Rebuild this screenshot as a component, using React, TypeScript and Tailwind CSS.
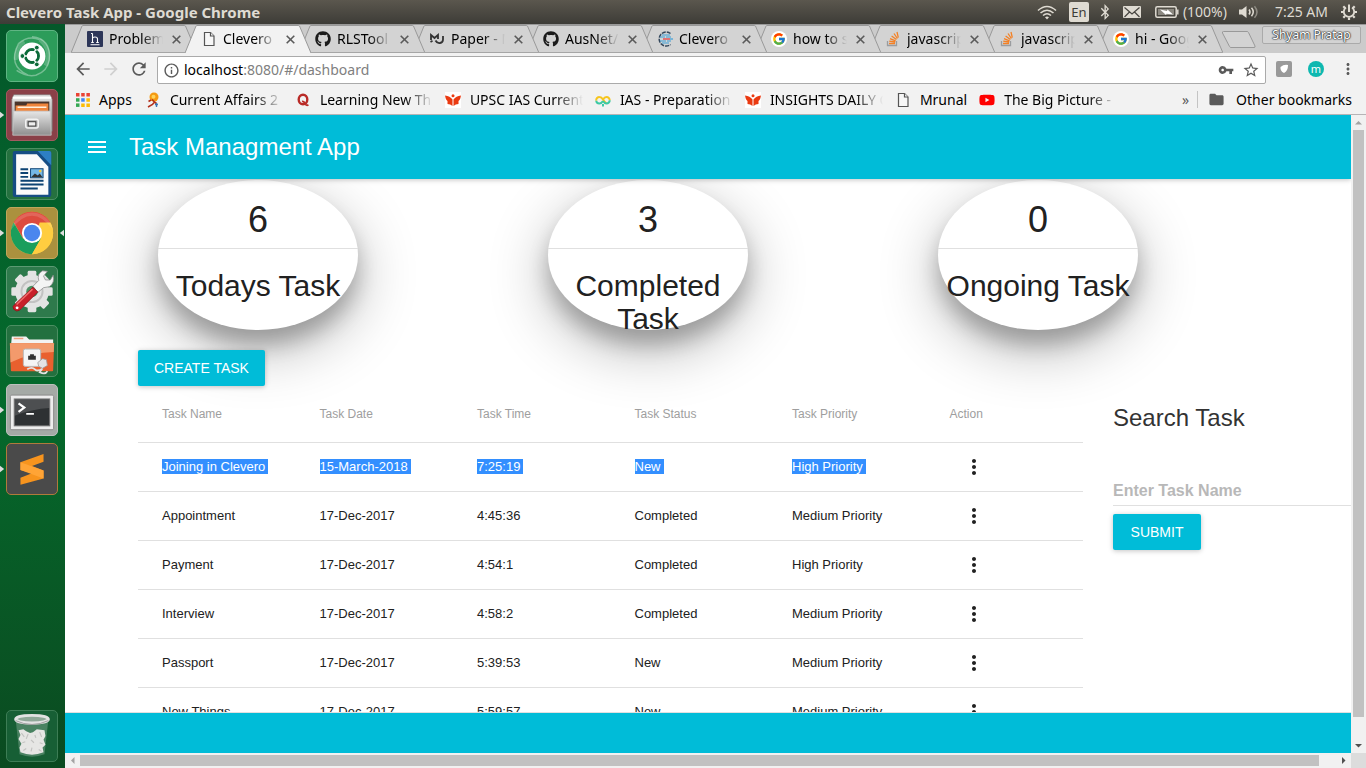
import React from 'react';
import { FaBluetoothB, FaGithub, FaStackOverflow, FaYoutube } from 'react-icons/fa';
import { FcGoogle } from 'react-icons/fc';
import {
  MdArrowBack,
  MdArrowForward,
  MdFolder,
  MdInfoOutline,
  MdMenu,
  MdMoreVert,
  MdRefresh,
  MdStarBorder,
  MdVpnKey,
} from 'react-icons/md';

/* ---------- small drawings ---------- */

const PageIcon = () => (
  <svg viewBox="0 0 16 16" className="size-4" fill="#f7f7f7" stroke="#555" strokeWidth="1.2">
    <path d="M3.5 1.5h6l3.5 3.5v9.5H3.5z" />
    <path d="M9.5 1.5V5H13" />
  </svg>
);

const HackerIcon = () => (
  <svg viewBox="0 0 16 16" className="size-4">
    <rect width="16" height="16" rx="1" fill="#2d3658" />
    <path d="M5.5 2.5v9M5.5 7.5q0-1.500 2.500-1.500t2.500 2v3.500M4 2.500h1.500M4.200 11.500h2.600M9.200 11.500h2.600M3.500 13.800h9" stroke="#fff" strokeWidth="1.100" fill="none" />
  </svg>
);

const PaperIcon = () => (
  <svg viewBox="0 0 16 16" className="size-4" fill="none" stroke="#333" strokeWidth="1.800">
    <path d="M2 9V4l3.500 3L9 4v4" />
    <path d="M6.500 9.500q1.500 3 4.500 2.500 3-.5 3-3.500V5" />
    <path d="M1.500 11l2-1.200" />
  </svg>
);

const CleveroIcon = () => (
  <svg viewBox="0 0 16 16" className="size-4" fill="none" strokeWidth="1.500">
    <path d="M13.500 2.500A7 7 0 1 0 13.500 13.500" stroke="#33475c" strokeDasharray="4 1" />
    <path d="M5 4h8M3 6h5M9 6h5M3 10h6M10 10h4M5 12h7" stroke="#3d9fd8" strokeWidth="1.200" />
    <path d="M6 8h7" stroke="#e5484d" strokeWidth="1.400" />
    <path d="M13 8h3" stroke="#3d9fd8" strokeWidth="1.200" />
  </svg>
);

const StackIcon = () => (
  <svg viewBox="0 0 16 16" className="size-4" fill="none">
    <path d="M2.500 10v4.500h9V10" stroke="#9a9c9f" strokeWidth="1.300" />
    <path d="M4 12.500h6M4.200 10.200l6 .8M5 7.600l5.600 2.200M6.600 5l4.800 3.600M9 2.500l3.400 5M12 1l1.300 5.700" stroke="#f48024" strokeWidth="1.300" />
  </svg>
);

const GoogleIcon = () => (
  <span className="grid size-4 place-items-center rounded-full bg-white">
    <FcGoogle className="size-[14px]" />
  </span>
);

const AppsIcon = () => (
  <svg viewBox="0 0 16 16" className="size-4">
    <path d="M1 1h3.500v3.500H1zM6.200 1h3.500v3.500H6.200zM11.400 1h3.500v3.500h-3.500z" fill="#ea4335" />
    <path d="M1 6.200h3.500v3.500H1z" fill="#34a853" />
    <path d="M6.200 6.200h3.500v3.500H6.200z" fill="#4285f4" />
    <path d="M11.400 6.200h3.500v3.500h-3.500zM6.200 11.400h3.500v3.500H6.200zM11.400 11.400h3.500v3.500h-3.500z" fill="#fbbc05" />
    <path d="M1 11.400h3.500v3.500H1z" fill="#34a853" />
  </svg>
);

const AffairsIcon = () => (
  <svg viewBox="0 0 16 16" className="size-4">
    <circle cx="9" cy="5" r="4.500" fill="#f59a12" />
    <circle cx="8.500" cy="4.800" r="2" fill="#ffd35a" />
    <path d="M7 7.500l2.500 2.500-2 2.500-4.500 2.500M9.500 10l2 1.500M6 8l-2.500 1.500" stroke="#b3301c" strokeWidth="1.600" fill="none" />
    <path d="M10 12.500h3M11.500 11v4" stroke="#3d77b5" strokeWidth="1.400" />
  </svg>
);

const QuoraIcon = () => (
  <svg viewBox="0 0 16 16" className="size-4" fill="none" stroke="#b92b27">
    <ellipse cx="8" cy="7.500" rx="4.300" ry="4.800" strokeWidth="2.400" />
    <path d="M7 9.500q2-.5 3 2t3.500 1.500" strokeWidth="1.800" />
  </svg>
);

const BookIcon = () => (
  <svg viewBox="0 0 16 16" className="size-4">
    <rect width="16" height="16" fill="#fff" />
    <path d="M0 3.500q5 .5 7.500 4V14Q5.500 12 2.500 12V9Q.8 8 0 3.500zM16 3.500q-5 .5-7.500 4V14q2-2 5-2V9q1.700-1 2.500-5.500z" fill="#ea3a12" />
    <circle cx="8" cy="3.800" r="1.500" fill="#ea3a12" />
  </svg>
);

const LoopIcon = () => (
  <svg viewBox="0 0 16 16" className="size-4" fill="none" strokeWidth="2">
    <path d="M8 9Q6.500 11.500 4.500 11.500a3.200 3.200 0 0 1-3.300-3" stroke="#3cc9a4" />
    <path d="M1.200 8.500A3.200 3.200 0 0 1 4.500 5Q6.500 5 8 7.500T11.500 11.500" stroke="#f6c51e" />
    <path d="M8 7.500Q9.500 5 11.500 5a3.200 3.200 0 0 1 3.200 3.300" stroke="#f6c51e" />
    <path d="M14.700 8.200a3.200 3.200 0 0 1-3.200 3.300Q9.500 11.500 8 9M8 12v2.500" stroke="#3cc9a4" />
  </svg>
);

const WifiIcon = () => (
  <svg viewBox="0 0 20 16" className="h-4 w-5" fill="none" stroke="#dfdbd2" strokeWidth="1.600">
    <path d="M1 6.500Q10-1.500 19 6.500" />
    <path d="M3.500 9Q10 3.500 16.500 9" />
    <path d="M6 11.500Q10 8 14 11.500" />
    <path d="M8 13.300Q10 11.500 12 13.300L10 15.500z" fill="#dfdbd2" stroke="none" />
  </svg>
);

const MailIcon = () => (
  <svg viewBox="0 0 18 14" className="h-[14px] w-[18px]">
    <rect y="1" width="18" height="12" rx="1" fill="#dfdbd2" />
    <path d="M1.500 2.500L9 9l7.500-6.500M1.500 12l5-5M16.500 12l-5-5" stroke="#474540" strokeWidth="1.200" fill="none" />
  </svg>
);

const BatteryIcon = () => (
  <svg viewBox="0 0 24 14" className="h-[14px] w-6">
    <rect x=".8" y="1.800" width="20.400" height="10.400" rx="1.500" fill="none" stroke="#dfdbd2" strokeWidth="1.500" />
    <rect x="3" y="4" width="16" height="6" fill="#8b8880" />
    <path d="M22.800 4.500v5" stroke="#dfdbd2" strokeWidth="1.500" />
    <path d="M5 4.500l7 1.500.5-1.500L18 9.500l-6.500-.8-.5 1.300z" fill="#fff" />
  </svg>
);

const SoundIcon = () => (
  <svg viewBox="0 0 20 16" className="h-4 w-5" fill="none" stroke="#dfdbd2" strokeWidth="1.500">
    <path d="M0 5.500h3L7.500 2v12L3 10.500H0z" fill="#dfdbd2" stroke="none" />
    <path d="M10 5.500q2 2.500 0 5" />
    <path d="M12.500 3.800q3.500 4.200 0 8.400" />
    <path d="M15.500 2.200q5 5.800 0 11.600" stroke="#8e8b83" />
  </svg>
);

const SessionIcon = () => (
  <svg viewBox="0 0 18 18" className="size-[18px]" fill="none" stroke="#dfdbd2">
    <path d="M6 4.500a5.200 5.200 0 1 0 6 0" strokeWidth="1.800" />
    <path d="M9 1.500V9" strokeWidth="2" />
    <path d="M1 9h2.500M14.500 9H17M3.300 14.700L5 13M14.700 14.700L13 13M3.300 3.300L5 5M14.700 3.300L13 5M9 14.500V17" strokeWidth="2.200" />
  </svg>
);

/* ---------- launcher drawings ---------- */

const UbuntuArt = () => (
  <svg viewBox="0 0 52 52" className="size-full">
    <g fill="none" stroke="#fff">
      <path d="M26 6q20 2 18 24-2 12-14 16M12 13Q0 36 22 46M30 46q-10 2-20-5M12 13Q22 4 34 9" strokeOpacity=".35" strokeWidth="1.500" />
      <path d="M34 9q14 12 6 27M9 30q1-14 9-19" strokeOpacity=".2" strokeWidth="4" />
    </g>
    <circle cx="26" cy="26" r="14" fill="#fff" />
    <circle cx="26" cy="26" r="6.800" fill="none" stroke="#0c6b39" strokeWidth="3" />
    <path d="M26 26H16M26 26l5-8.700M26 26l5 8.700" stroke="#fff" strokeWidth="1.500" />
    <circle cx="26" cy="26" r="5.300" fill="#fff" />
    <g fill="#0c6b39" stroke="#fff" strokeWidth="1">
      <circle cx="16" cy="26" r="2.500" />
      <circle cx="31" cy="17.300" r="2.500" />
      <circle cx="31" cy="34.700" r="2.500" />
    </g>
  </svg>
);

const FilesArt = () => (
  <svg viewBox="0 0 52 52" className="size-full">
    <defs>
      <linearGradient id="steel" x1="0" y1="0" x2="0" y2="1">
        <stop offset="0" stopColor="#e6e6e6" />
        <stop offset="1" stopColor="#8f8f8f" />
      </linearGradient>
    </defs>
    <path d="M7 5h38l2 5v33H5V10z" fill="url(#steel)" stroke="#777" strokeWidth=".6" />
    <path d="M6 8h40" stroke="#fff" strokeWidth="2" />
    <rect x="8" y="12" width="36" height="10" fill="#4a342b" />
    <path d="M9 16h11l1-2h22v8H9z" fill="#f0853c" />
    <path d="M11 18h30" stroke="#fff0dd" strokeWidth="1.500" />
    <path d="M7 22h38l1 25H6z" fill="url(#steel)" stroke="#c9c9c9" strokeWidth=".8" />
    <rect x="19.500" y="30.500" width="13" height="9" rx="2" fill="#bbb" stroke="#f2f2f2" strokeWidth="1.500" />
    <rect x="22" y="33" width="8" height="4.500" fill="#eee" stroke="#333" />
  </svg>
);

const WriterArt = () => (
  <svg viewBox="0 0 52 52" className="size-full">
    <path d="M8 2h36q2 0 2 2v43q0 3-3 3H9q-3 0-3-3V4q0-2 2-2z" fill="#164d84" />
    <path d="M32 2h12q2 0 2 2v13z" fill="#2d7fc4" />
    <path d="M9.500 5.500H31L43 18.500v29H9.500z" fill="#fbfbfb" />
    <path d="M14 21h8M14 25h8M14 29h8M14 33h24M14 37h24M14 41h18" stroke="#0d4373" strokeWidth="2" />
    <rect x="24.500" y="20.500" width="13" height="9.500" fill="#75b7e5" stroke="#0d4373" />
    <path d="M25 29.500l4-4 3 2 2-2 3 4z" fill="#333" />
    <circle cx="34.500" cy="23" r="1.400" fill="#f5c83c" />
  </svg>
);

const ChromeArt = () => (
  <svg viewBox="0 0 52 52" className="size-full">
    <circle cx="26" cy="26" r="22" fill="#ffcd40" />
    <path d="M26 26L6.950 15A22 22 0 0 1 45.050 15z" fill="#dd4b3e" />
    <path d="M26 15h19a22 22 0 0 0-38-.2L16.500 31.500 18 22z" fill="#dd4b3e" />
    <path d="M6.950 15A22 22 0 0 0 26 48l9.500-16.500L26 36l-9.500-4.500z" fill="#1a9e5c" />
    <path d="M26 48l9.500-16.500L36 26l-3-8 1-3h11a22 22 0 0 1-19 33z" fill="#ffcd40" />
    <path d="M4.500 22a22 22 0 0 1 43 0Q26-6 4.500 22z" fill="#fff" opacity=".15" />
    <circle cx="26" cy="26" r="10.500" fill="#fff" />
    <circle cx="26" cy="26" r="8.500" fill="#4a86ee" />
  </svg>
);

const SettingsArt = () => (
  <svg viewBox="0 0 52 52" className="size-full">
    <g fill="#e3e3e3">
      {[0, 45, 90, 135].map((a) => (
        <rect key={a} x="21.500" y="4" width="9" height="43" rx="1.500" transform={`rotate(${a} 26 25.500)`} />
      ))}
      <circle cx="26" cy="25.500" r="17.500" />
    </g>
    <circle cx="26" cy="25.500" r="11" fill="none" stroke="#c2c2c2" strokeWidth="2" />
    <circle cx="26" cy="25.500" r="6" fill="#4b8f63" />
    <path d="M27 20l6-6q-2-7 4-10l5 .5-4 5 2 4 5 0 3-5q2 8-4 12l-6 1-6 5z" fill="#f4f4f4" stroke="#8c8c8c" strokeWidth=".8" />
    <path d="M27 21l5 5-19 19q-3 2-6-1-2-3 1-5z" fill="#c8202a" stroke="#8d1219" strokeWidth=".8" />
    <path d="M26.500 23L10 39" stroke="#f06a6a" strokeWidth="1.500" />
    <circle cx="10.500" cy="42.500" r="1.500" fill="#fff" />
  </svg>
);

const NetworkArt = () => (
  <svg viewBox="0 0 52 52" className="size-full">
    <path d="M5 11h15l3 3h25v8H4z" fill="#f3f3f3" />
    <path d="M7 13h10" stroke="#f0a080" strokeWidth="1.500" />
    <path d="M3 18h46l-1 28q0 1-1 1H5q-1 0-1-1z" fill="#e9602e" />
    <path d="M3 18h46l-.4 9Q26 27 3.600 38z" fill="#f39a6c" />
    <rect x="17" y="24" width="18" height="18" rx="2" fill="#f5f5f5" stroke="#b9b9b9" />
    <path d="M22 35v-4h2v-1.500h4V31h2v4z" fill="#333" />
    <path d="M21 45q5-3 8 0t8-1l-3 4q6 3 8-1" fill="none" stroke="#e2e2e2" strokeWidth="1.800" />
    <path d="M32 38l5-4 4 1 1 6-5 3-4-2z" fill="#e4e4e4" stroke="#999" strokeWidth=".8" />
  </svg>
);

const TerminalArt = () => (
  <svg viewBox="0 0 52 52" className="size-full">
    <rect x="3.500" y="10.500" width="45" height="36" rx="1.500" fill="#ededed" stroke="#888" />
    <rect x="7.500" y="14.500" width="37" height="28" fill="#2e3133" stroke="#777" />
    <path d="M8 15h36v9Q26 25 8 32z" fill="#fff" opacity=".15" />
    <path d="M12 19l6 4.500-6 4.500" fill="none" stroke="#fff" strokeWidth="2.300" />
    <path d="M20 30h8" stroke="#fff" strokeWidth="2" />
  </svg>
);

const SublimeArt = () => (
  <svg viewBox="0 0 52 52" className="size-full">
    <path d="M14 19L38 10.500v8L26 23l12 4.500V36L14 42.500V35l12-4.500L14 27z" fill="#f7941e" />
    <path d="M14 19v8l24 9v-8.500z" fill="#ffa436" />
  </svg>
);

const TrashArt = () => (
  <svg viewBox="0 0 52 52" className="size-full">
    <path d="M9 9l4 36q13 5 26 0l4-36z" fill="#fff" opacity=".22" />
    <path d="M12 20l5-1 3 2 4 2 3-1 4-3 8 1 1 6-2 4 2 5-3 3 1 5q-12 5-24 0l-1-5 2-4-3-5 2-4z" fill="#e6e6e4" />
    <path d="M15 23l3 4M22 24l-2 5M34 22l2 5M16 33l3-1M25 30l3 3M34 33l3 1M17 41l3-2M26 38l-1 4M33 40l3 2M29 25l1 3" fill="none" stroke="#c3c3c1" strokeWidth="1.200" />
    <ellipse cx="26" cy="8.500" rx="17" ry="4" fill="#8fa898" stroke="#e2e2e2" strokeWidth="3" />
    <path d="M9 10q17 8 34 0" fill="none" stroke="#9d9d9d" strokeWidth="1" />
  </svg>
);

/* ---------- data ---------- */

const launcher = [
  { name: 'Search your computer', art: <UbuntuArt />, tile: 'bg-[#2c9c5a] border-[#5fb583]' },
  { name: 'Files', art: <FilesArt />, tile: 'bg-[#8a4048] border-[#a35a60]', running: true },
  { name: 'LibreOffice Writer', art: <WriterArt />, tile: 'bg-[#25713f] border-[#4b8f62]' },
  { name: 'Google Chrome', art: <ChromeArt />, tile: 'bg-[#ab913e] border-[#bfa65c]', running: true, focused: true },
  { name: 'System Settings', art: <SettingsArt />, tile: 'bg-[#2e7a4c] border-[#5c9a73]' },
  { name: 'Network', art: <NetworkArt />, tile: 'bg-[#23703f] border-[#4b8f62]' },
  { name: 'Terminal', art: <TerminalArt />, tile: 'bg-[#a5aaa6] border-[#bcc0bd]', running: true },
  { name: 'Sublime Text', art: <SublimeArt />, tile: 'bg-[#4a4a4a] border-[#b07a3c]', running: true },
];

const tabs = [
  { title: 'Problem', icon: <HackerIcon /> },
  { title: 'Clevero', icon: <PageIcon />, active: true },
  { title: 'RLSTool', icon: <FaGithub className="size-4 text-[#1b1b1b]" /> },
  { title: 'Paper - M', icon: <PaperIcon /> },
  { title: 'AusNet/', icon: <FaGithub className="size-4 text-[#1b1b1b]" /> },
  { title: 'Clevero', icon: <CleveroIcon /> },
  { title: 'how to s', icon: <GoogleIcon /> },
  { title: 'javascrip', icon: <StackIcon /> },
  { title: 'javascrip', icon: <StackIcon /> },
  { title: 'hi - Goog', icon: <GoogleIcon /> },
];

const bookmarks = [
  { title: 'Current Affairs 2', icon: <AffairsIcon /> },
  { title: 'Learning New Th', icon: <QuoraIcon /> },
  { title: 'UPSC IAS Current', icon: <BookIcon /> },
  { title: 'IAS - Preparation', icon: <LoopIcon /> },
  { title: 'INSIGHTS DAILY C', icon: <BookIcon /> },
  { title: 'Mrunal', icon: <PageIcon />, short: true },
  { title: 'The Big Picture -', icon: <FaYoutube className="size-4 text-[#f00]" /> },
];

const stats = [
  { count: 6, label: 'Todays Task' },
  { count: 3, label: 'Completed Task' },
  { count: 0, label: 'Ongoing Task' },
];

const columns = ['Task Name', 'Task Date', 'Task Time', 'Task Status', 'Task Priority', 'Action'];

const tasks = [
  ['Joining in Clevero', '15-March-2018', '7:25:19', 'New', 'High Priority'],
  ['Appointment', '17-Dec-2017', '4:45:36', 'Completed', 'Medium Priority'],
  ['Payment', '17-Dec-2017', '4:54:1', 'Completed', 'High Priority'],
  ['Interview', '17-Dec-2017', '4:58:2', 'Completed', 'Medium Priority'],
  ['Passport', '17-Dec-2017', '5:39:53', 'New', 'Medium Priority'],
  ['New Things', '17-Dec-2017', '5:59:57', 'New', 'Medium Priority'],
];

/* ---------- desktop ---------- */

function SystemBar() {
  return (
    <header className="flex h-6 shrink-0 items-center justify-between bg-linear-to-b from-[#5b574e] to-[#3d3c37] pr-2 pl-[6px] text-sm text-[#dfdbd2]">
      <h1 className="text-[15px] leading-5 font-bold">Clevero Task App - Google Chrome</h1>
      <div className="flex items-center">
        <WifiIcon />
        <span className="ml-3 grid h-5 w-5 place-items-center rounded-xs bg-[#dfdbd2] text-[13px] text-[#3d3c37]">En</span>
        <FaBluetoothB className="ml-2 size-4" />
        <span className="ml-[10px]"><MailIcon /></span>
        <span className="ml-[14px]"><BatteryIcon /></span>
        <span className="ml-1">(100%)</span>
        <span className="ml-3"><SoundIcon /></span>
        <time className="ml-4 whitespace-nowrap">7:25 AM</time>
        <span className="ml-3"><SessionIcon /></span>
      </div>
    </header>
  );
}

function Launcher() {
  return (
    <nav aria-label="Launcher" className="flex w-[65px] shrink-0 flex-col gap-[7px] bg-linear-to-b from-[#04582a] via-[#046a2c] to-[#0a4a20] pt-[6px] pb-[6px]">
      {launcher.map((item) => (
        <div key={item.name} className="flex items-center">
          <span className="w-[6px]">
            {item.running && (
              <svg viewBox="0 0 6 8" className="h-2 w-[5px]"><path d="M0 0l5 4-5 4z" fill="#ddd" /></svg>
            )}
          </span>
          <button aria-label={item.name} className={`size-[52px] overflow-hidden rounded-[5px] border ${item.tile}`}>
            {item.art}
          </button>
          {item.focused && (
            <svg viewBox="0 0 6 8" className="ml-[1px] h-2 w-[5px]"><path d="M6 0L1 4l5 4z" fill="#ddd" /></svg>
          )}
        </div>
      ))}
      <button aria-label="Trash" className="mt-auto ml-[6px] size-[52px] overflow-hidden rounded-[5px] border border-[#3d7d55] bg-[#175f35]">
        <TrashArt />
      </button>
    </nav>
  );
}

function TabStrip() {
  return (
    <div className="flex h-[29px] items-start border-t border-[#999] bg-[#cbcbcb] pr-[5px]">
      <div role="tablist" className="flex pl-[6px]">
        {tabs.map((tab, i) => (
          <div
            key={i}
            className="relative -mr-3 flex h-7 w-[126px] shrink-0 items-center px-4"
            style={{ zIndex: tab.active ? 20 : 10 - i }}
          >
            <svg viewBox="0 0 126 28" className="absolute inset-0 size-full" fill={tab.active ? '#f2f2f2' : '#d3d3d3'}>
              <path d="M0 28L11 1Q11.500 .5 12 .5H113Q114 .5 114.500 1L126 28z" />
              <path d="M0 28L11 1Q11.500 .5 12 .5H113Q114 .5 114.500 1L126 28" fill="none" stroke="#999" />
              {!tab.active && <path d="M0 27.500H126" stroke="#a6a6a6" />}
            </svg>
            <span className="relative">{tab.icon}</span>
            <button
              role="tab"
              aria-selected={!!tab.active}
              className="relative ml-[6px] w-[54px] overflow-hidden text-left text-sm whitespace-nowrap text-black [mask-image:linear-gradient(to_right,black_60%,transparent)]"
            >
              {tab.title}
            </button>
            <button aria-label="Close tab" className="relative ml-auto">
              <svg viewBox="0 0 9 9" className="size-[9px]" stroke="#5a5a5a" strokeWidth="1.600"><path d="M.7.7l7.600 7.600M8.300.7L.7 8.300" /></svg>
            </button>
          </div>
        ))}
      </div>
      <button aria-label="New tab" className="mt-[6px] ml-[10px]">
        <svg viewBox="0 0 36 18" className="h-[18px] w-9" fill="#d3d3d3" stroke="#999">
          <path d="M2.500.5H26q1 0 1.500 1L34 15q.5 1.500-1 1.500H10q-1 0-1.500-1L1.500 2q-.5-1.500 1-1.500z" />
        </svg>
      </button>
      <button className="mt-[1px] ml-auto h-[18px] w-[99px] rounded-xs border border-[#aaa] bg-[#d3d3d3] text-xs leading-4 whitespace-nowrap text-white [text-shadow:0_0_1px_#333,0_0_1px_#333,0_0_2px_#333,0_0_1px_#333]">
        Shyam Pratap
      </button>
    </div>
  );
}

function AddressBar() {
  return (
    <div className="flex h-8 items-center bg-[#f2f2f2] pr-[9px] pl-2 text-[#5a5a5a]">
      <button aria-label="Back"><MdArrowBack className="size-5" /></button>
      <button aria-label="Forward" className="ml-2 text-[#d0d0d0]"><MdArrowForward className="size-5" /></button>
      <button aria-label="Reload" className="ml-2"><MdRefresh className="size-5" /></button>
      <form className="mt-[2px] ml-2 flex h-7 flex-1 items-center rounded-xs border border-[#aaa] bg-white px-[5px]">
        <MdInfoOutline className="size-[17px]" />
        <label className="relative ml-1 flex h-6 flex-1 items-center text-sm">
          <input aria-label="Address" defaultValue="localhost:8080/#/dashboard" className="w-full bg-transparent text-[#808080] outline-none" />
          <span aria-hidden="true" className="pointer-events-none absolute left-0 bg-white text-black">localhost</span>
        </label>
        <MdVpnKey className="size-4" />
        <MdStarBorder className="ml-2 size-[18px]" />
      </form>
      <button aria-label="Extension" className="ml-[10px] grid size-4 place-items-center rounded-xs bg-[#999]">
        <svg viewBox="0 0 10 10" className="size-[10px]"><path d="M1.500 3Q5 0 9 1q0 6-4 8-4-2-3.500-6z" fill="#fff" /></svg>
      </button>
      <button className="ml-4 size-4 rounded-full bg-[#0eb8b0] text-[11px] leading-[14px] text-white">m</button>
      <button aria-label="Menu" className="ml-[15px]"><MdMoreVert className="size-[18px]" /></button>
    </div>
  );
}

function BookmarkBar() {
  return (
    <div className="flex h-[30px] items-center border-b border-[#b6b4b6] bg-[#f2f2f2] pr-[14px] pl-[10px] text-sm whitespace-nowrap text-black">
      <a href="#apps" className="flex items-center gap-2"><AppsIcon />Apps</a>
      <div className="flex min-w-0 flex-1 gap-3 overflow-hidden pl-[13px]">
        {bookmarks.map((b) => (
          <a key={b.title} href="#bookmark" className="flex shrink-0 items-center gap-[9px]">
            {b.icon}
            {b.short ? (
              <span>{b.title}</span>
            ) : (
              <span className="w-[113px] overflow-hidden [mask-image:linear-gradient(to_right,black_75%,transparent)]">{b.title}</span>
            )}
          </a>
        ))}
      </div>
      <button aria-label="More bookmarks" className="mr-2 text-[#5a5a5a]">»</button>
      <a href="#other" className="flex items-center gap-[11px] border-l border-[#c4c4c4] pl-[10px] leading-4">
        <MdFolder className="size-[17px] text-[#5a5a5a]" />
        Other bookmarks
      </a>
    </div>
  );
}

function Arrow({ dir, dim = false }: { dir: 'up' | 'down' | 'left' | 'right'; dim?: boolean }) {
  const d = {
    up: 'M4 9.500h7L7.500 6z',
    down: 'M4 6h7L7.500 9.500z',
    left: 'M9.500 4v7L6 7.500z',
    right: 'M6 4v7l3.500-3.500z',
  }[dir];
  return (
    <svg viewBox="0 0 15 15" className="size-[15px] shrink-0" fill={dim ? '#a3a3a3' : '#505050'}>
      <path d={d} />
    </svg>
  );
}

/* ---------- task application ---------- */

const raised = 'h-9 min-w-[88px] rounded-xs bg-[#00bcd8] px-4 text-sm text-white uppercase shadow-[0_1px_6px_rgba(0,0,0,0.12),0_1px_4px_rgba(0,0,0,0.12)]';

function StatCard({ count, label }: { count: number; label: string }) {
  return (
    <section className="ml-5 h-[150px] w-[200px] rounded-[50%] bg-white text-center shadow-[0_19px_60px_rgba(0,0,0,0.3),0_15px_20px_rgba(0,0,0,0.22)]">
      <p className="border-b border-[#e0e0e0] pt-5 pb-2 text-4xl leading-10">{count}</p>
      <h3 className="pt-5 text-3xl leading-[33px]">{label}</h3>
    </section>
  );
}

function TaskTable() {
  return (
    <table className="w-full table-fixed border-collapse text-left text-[13px]">
      <thead>
        <tr className="h-14 border-b border-[#e0e0e0] text-xs text-[#9e9e9e]">
          {columns.map((c) => (
            <th key={c} className="px-6 font-normal whitespace-nowrap">{c}</th>
          ))}
        </tr>
      </thead>
      <tbody>
        {tasks.map((row, i) => (
          <tr key={row[0]} className="h-[49px] border-b border-[#e0e0e0]">
            {row.map((cell, j) => (
              <td key={j} className="pl-6 whitespace-nowrap">
                {i === 0 ? <span className="bg-[#338fff] pr-[3px] text-white">{cell}</span> : cell}
              </td>
            ))}
            <td className="pl-6">
              <button aria-label={`Actions for ${row[0]}`} className="grid w-12 place-items-center">
                <MdMoreVert className="size-6" />
              </button>
            </td>
          </tr>
        ))}
      </tbody>
    </table>
  );
}

function TaskApp() {
  return (
    <div className="flex min-w-0 flex-1 flex-col overflow-hidden bg-white font-['Liberation_Sans',Arial,sans-serif] text-[#212121]">
      <header className="relative z-10 flex h-16 shrink-0 items-center bg-[#00bcd8] px-5 text-white shadow-[0_1px_6px_rgba(0,0,0,0.12),0_1px_4px_rgba(0,0,0,0.12)]">
        <button aria-label="Open menu"><MdMenu className="size-6" /></button>
        <h2 className="ml-5 text-2xl">Task Managment App</h2>
      </header>
      <main className="min-h-0 flex-1 overflow-hidden border-b border-[#e0e0e0]">
        <div className="mx-auto max-w-[1170px] pt-[1px]">
          <div className="grid grid-cols-3">
            {stats.map((s) => (
              <div key={s.label} className="px-[15px]"><StatCard {...s} /></div>
            ))}
          </div>
          <div className="relative mt-5 flex">
            <div className="w-10/12 shrink-0 px-[15px]">
              <button className={raised}>Create Task</button>
              <TaskTable />
            </div>
            <form className="shrink-0 px-[15px] pt-[52px]">
              <h3 className="text-2xl text-[#333]">Search Task</h3>
              <input
                aria-label="Enter Task Name"
                placeholder="Enter Task Name"
                className="mt-[42px] mb-2 block h-[30px] w-64 border-b border-[#e0e0e0] font-bold outline-none placeholder:text-[#b8b8b8]"
              />
              <button type="button" className={raised}>Submit</button>
            </form>
          </div>
        </div>
      </main>
      <footer className="h-10 shrink-0 bg-[#00bcd8]" />
    </div>
  );
}

export default function App() {
  return (
    <div className="flex h-screen flex-col overflow-hidden font-['Noto_Sans',sans-serif]">
      <SystemBar />
      <div className="flex min-h-0 flex-1">
        <Launcher />
        <div className="flex min-w-0 flex-1 flex-col">
          <TabStrip />
          <AddressBar />
          <BookmarkBar />
          <div className="flex min-h-0 flex-1">
            <TaskApp />
            <div aria-hidden="true" className="flex w-[15px] shrink-0 flex-col bg-[#f1f1f1]">
              <Arrow dir="up" dim />
              <div className="mx-[2px] mb-[21px] flex-1 bg-[#c1c1c1]" />
              <Arrow dir="down" />
            </div>
          </div>
          <div aria-hidden="true" className="flex h-[15px] shrink-0 bg-[#f1f1f1]">
            <Arrow dir="left" dim />
            <div className="my-[2px] mr-[17px] flex-1 bg-[#c1c1c1]" />
            <Arrow dir="right" />
            <div className="w-[15px] bg-[#dcdcdc]" />
          </div>
        </div>
      </div>
    </div>
  );
}
